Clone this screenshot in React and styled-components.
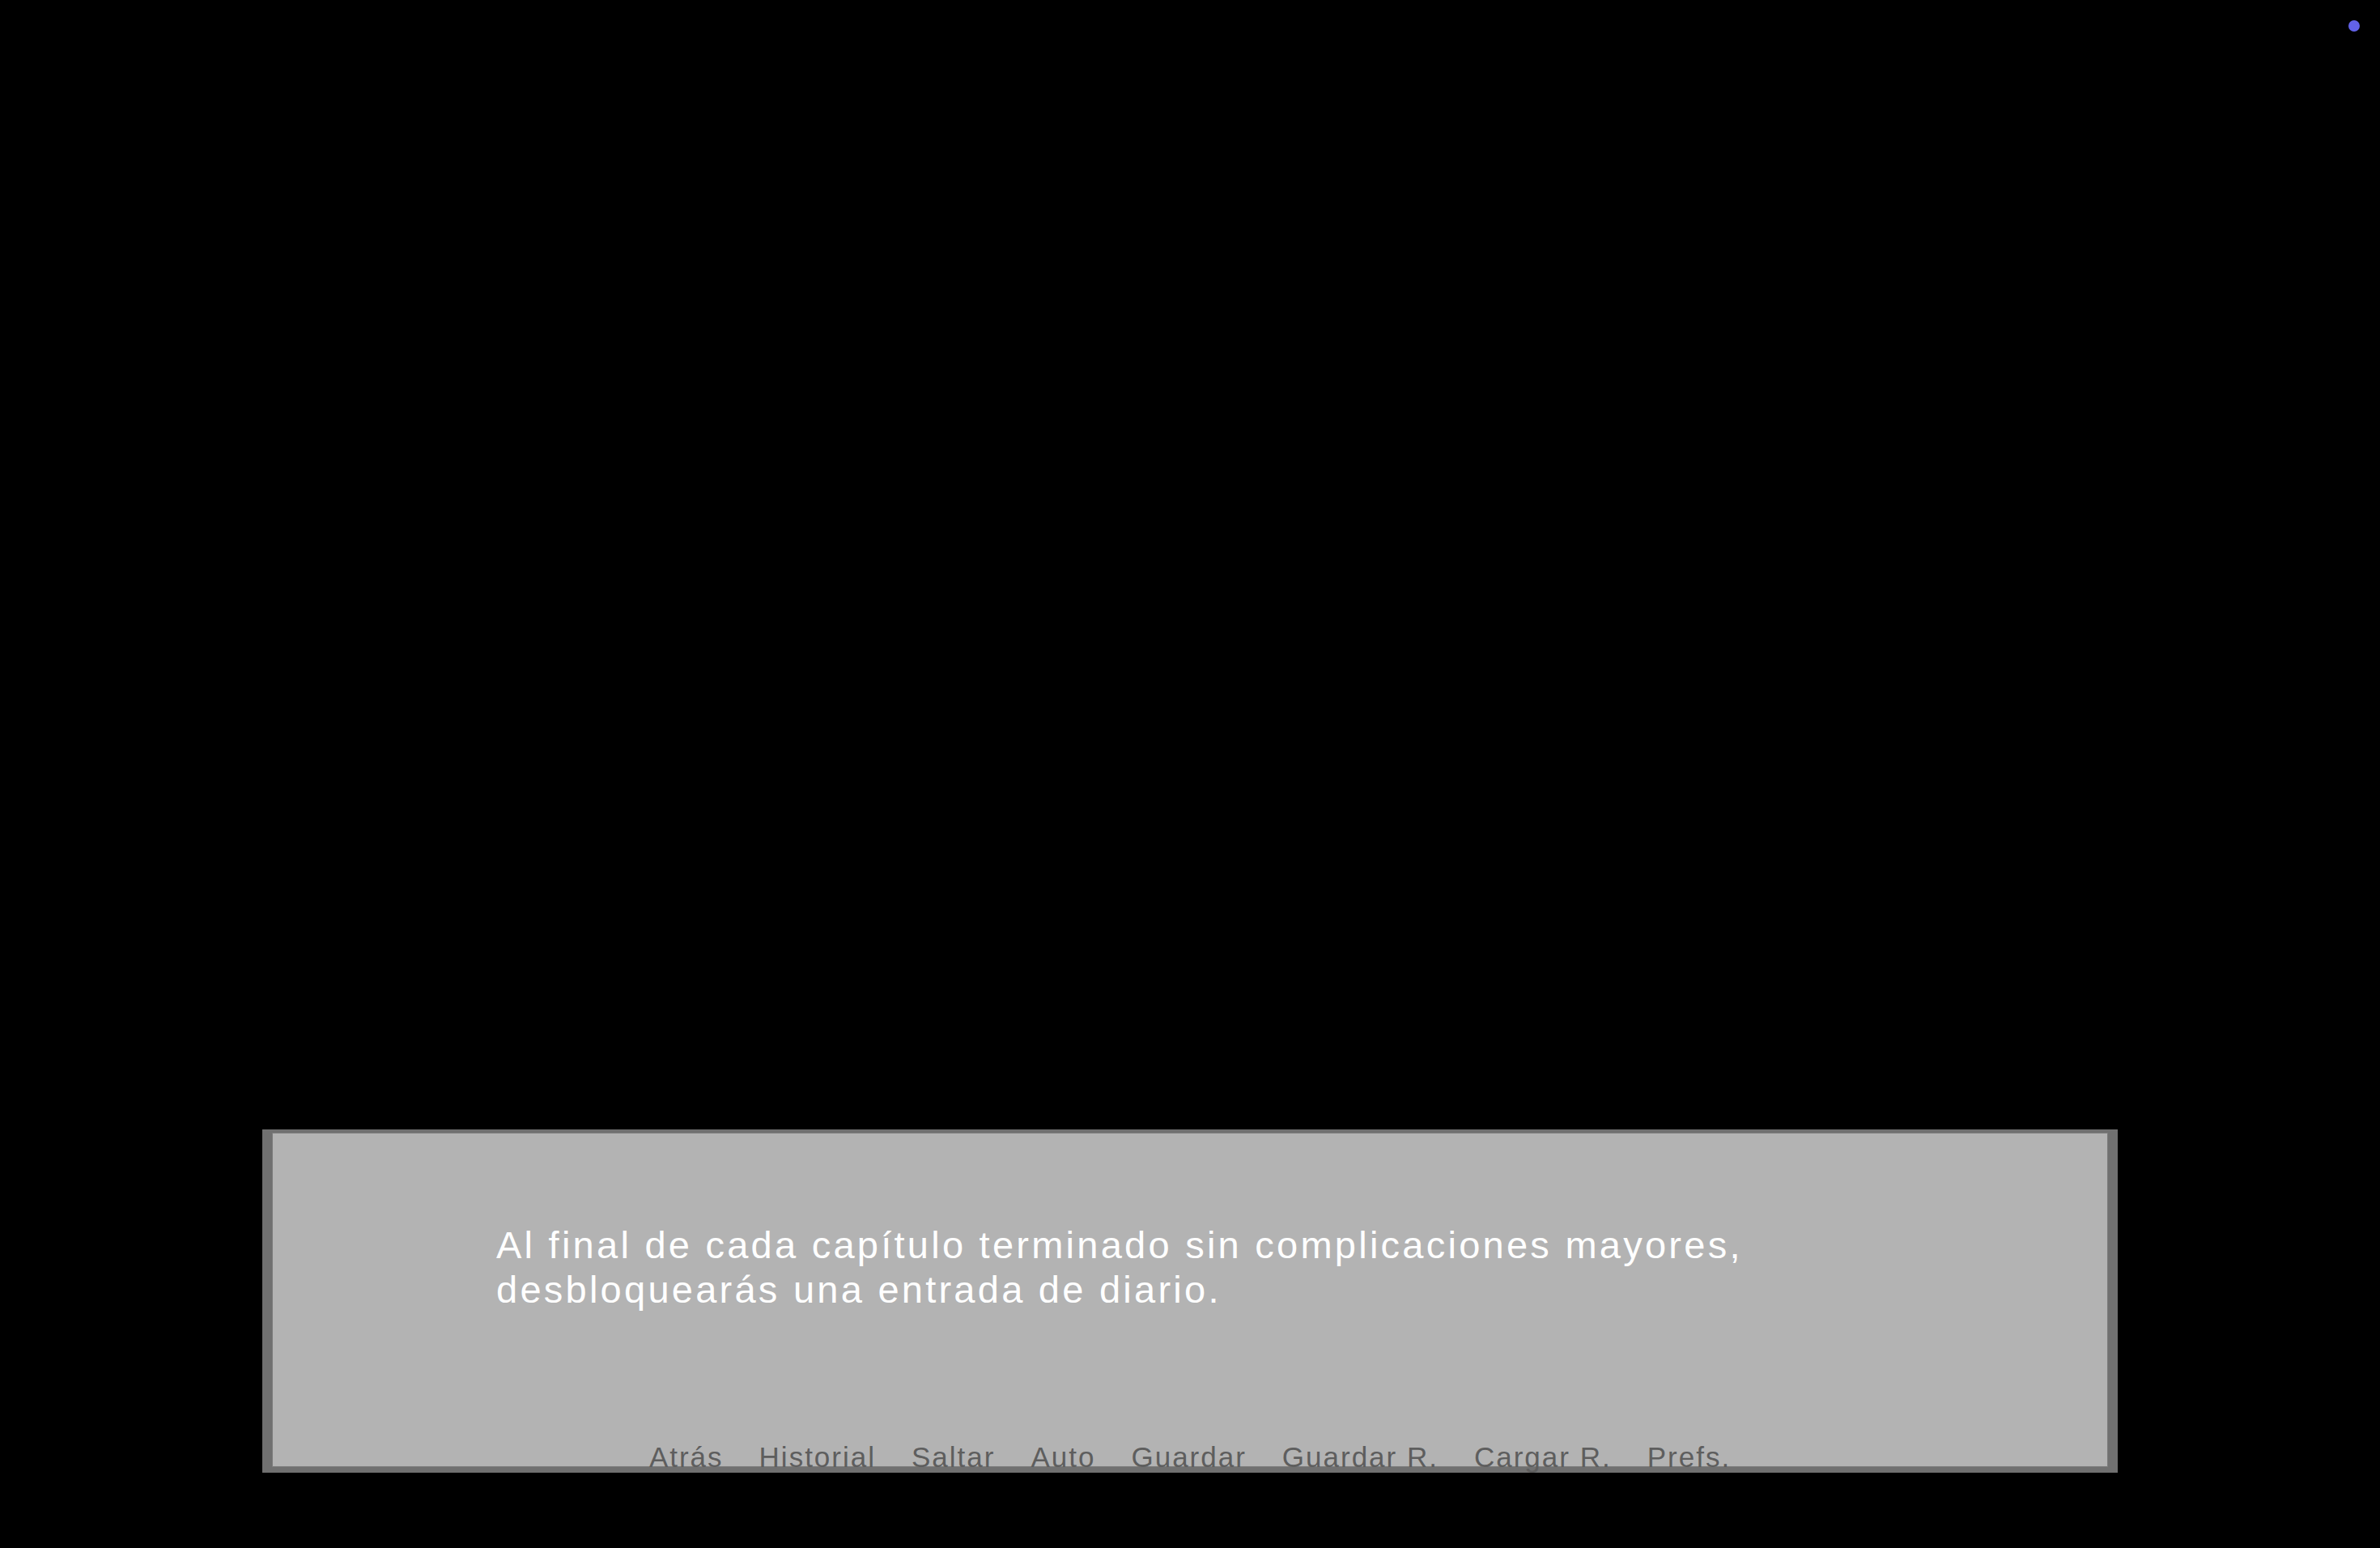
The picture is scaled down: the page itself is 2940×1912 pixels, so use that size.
import React from "react";
import styled, { createGlobalStyle } from "styled-components";

const GlobalStyle = createGlobalStyle`
  html, body {
    margin: 0;
    padding: 0;
    background: #000;
  }
  body {
    font-family: "Liberation Sans", Arial, sans-serif;
  }
`;

const menuItems = ["Atrás", "Historial", "Saltar", "Auto", "Guardar", "Guardar R.", "Cargar R.", "Prefs."];

const App = () => {
  return (
    <>
      <GlobalStyle />
      <Screen>
        <Indicator />
        <TextBox>
          <Dialogue>
            Al final de cada capítulo terminado sin complicaciones mayores,
            <br />
            desbloquearás una entrada de diario.
          </Dialogue>
          <QuickMenu>
            {menuItems.map((item) => (
              <MenuButton key={item}>{item}</MenuButton>
            ))}
          </QuickMenu>
        </TextBox>
      </Screen>
    </>
  );
};

const Screen = styled.div`
  position: relative;
  width: 100vw;
  height: 100vh;
  background: #000;
  display: flex;
  flex-direction: column;
  justify-content: flex-end;
  align-items: center;
  box-sizing: border-box;
  padding-bottom: 93px;
  overflow: hidden;
`;

const Indicator = styled.div`
  position: absolute;
  top: 25px;
  left: 2901px;
  width: 14px;
  height: 14px;
  border-radius: 50%;
  background: #6262e8;
`;

const TextBox = styled.div`
  box-sizing: border-box;
  width: 2292px;
  height: 424px;
  display: flex;
  flex-direction: column;
  background: #b3b3b3;
  border-style: solid;
  border-color: #707070;
  border-width: 4px 12px 7px 12px;
  box-shadow: inset 0 0 0 1px #7c7c7c;
  padding: 111px 0 0 277px;
`;

const Dialogue = styled.p`
  margin: 0;
  color: #fff;
  font-size: 47px;
  line-height: 55px;
  letter-spacing: 3.25px;
  white-space: nowrap;
`;

const QuickMenu = styled.div`
  margin-top: auto;
  margin-left: -277px;
  margin-bottom: -5px;
  display: flex;
  justify-content: center;
  gap: 44px;
`;

const MenuButton = styled.span`
  color: #5e5e5e;
  font-size: 35px;
  line-height: 35px;
  letter-spacing: 2px;
  cursor: pointer;
`;

export default App;
